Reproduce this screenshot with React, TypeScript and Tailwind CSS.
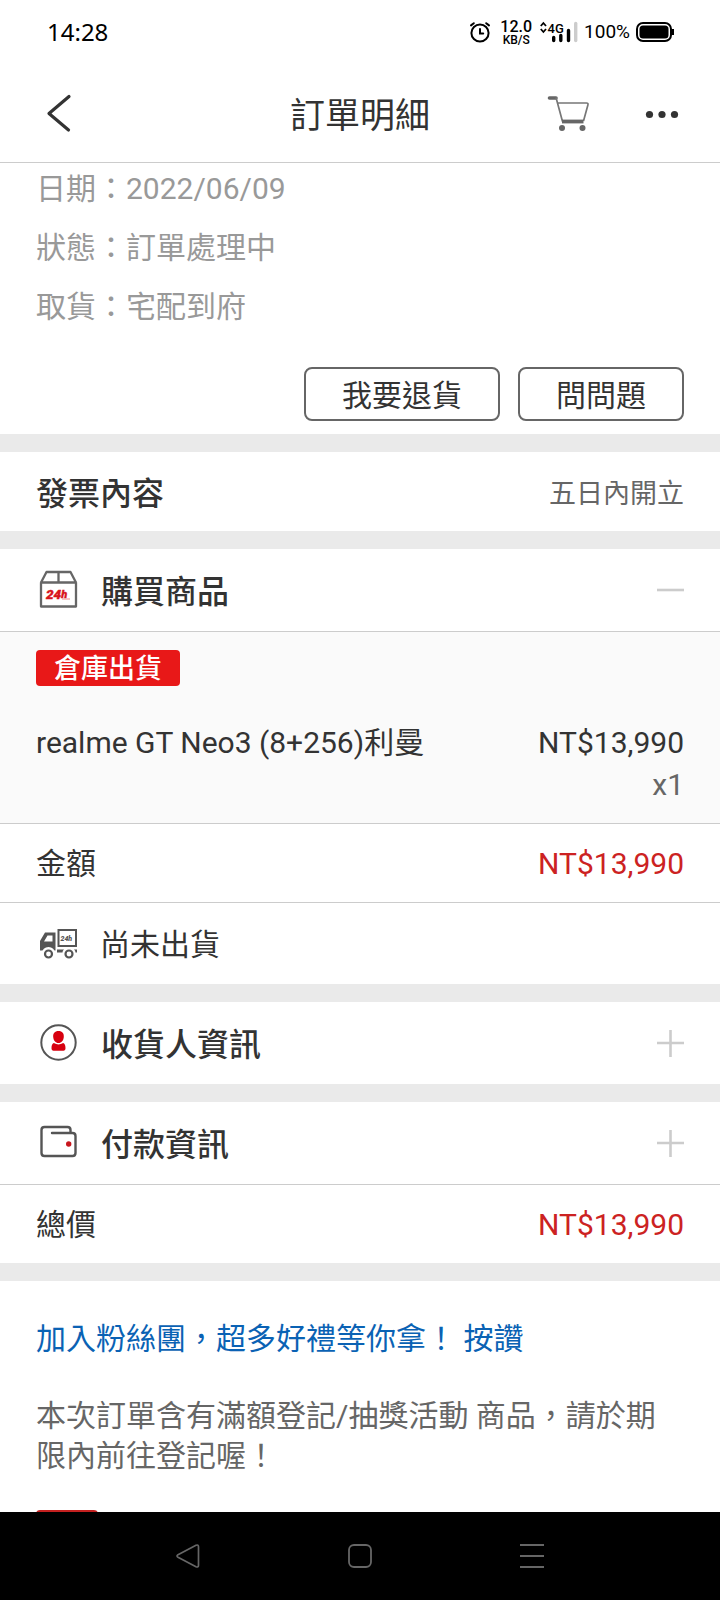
import { useState } from "react";
import type { ReactNode } from "react";

function AlarmIcon() {
  return (
    <svg viewBox="0 0 24 24" className="size-6" fill="none" stroke="#000" strokeWidth="2" strokeLinecap="round" aria-hidden="true">
      <circle cx="12" cy="13" r="8.6" />
      <path d="M12 9v4.6h3.2M3 5.4l2.8-2.2M21 5.4l-2.8-2.2" />
    </svg>
  );
}

function SignalIcon() {
  return (
    <svg viewBox="0 0 38 24" className="h-6 w-[38px]" aria-hidden="true">
      <path d="M.8 6 3.4 3 6 6M.8 9l2.600 3L6 9" fill="none" stroke="#000" strokeWidth="1.800" />
      <text x="7.500" y="12.500" fontSize="13" fontWeight="500" className="font-['Roboto',sans-serif]">4G</text>
      <g strokeWidth="3.400" strokeLinecap="round">
        <path d="M13.700 17.500v3M20.800 15.500v5M28.500 10.500v10" stroke="#000" />
        <path d="M35.700 3.500v17" stroke="#ccc" />
      </g>
    </svg>
  );
}

function BatteryIcon() {
  return (
    <svg viewBox="0 0 38 22" className="h-[22px] w-[38px]" aria-hidden="true">
      <rect x="1" y="2" width="34" height="18" rx="6" fill="none" stroke="#000" strokeWidth="2" />
      <rect x="3.500" y="4.500" width="29" height="13" rx="3.500" />
      <path d="M37 8v6" stroke="#000" strokeWidth="2" />
    </svg>
  );
}

function StatusBar() {
  return (
    <div className="flex h-16 shrink-0 items-center justify-between pr-[46px] pl-[47px] text-black">
      <span className="font-['Noto_Sans',sans-serif] text-[24px] leading-[32px]">14:28</span>
      <div className="flex items-center gap-2">
        <AlarmIcon />
        <div className="flex flex-col items-center font-medium">
          <span className="text-[16px] leading-[15px]">12.0</span>
          <span className="text-[12px] leading-[12px]">KB/S</span>
        </div>
        <div className="flex items-center gap-[6px]">
          <SignalIcon />
          <span className="text-[19px] leading-[24px]">100%</span>
          <BatteryIcon />
        </div>
      </div>
    </div>
  );
}

function Header() {
  return (
    <header className="grid h-[99px] shrink-0 grid-cols-[1fr_auto_1fr] items-center border-b border-[#ccc] px-10 text-[#333]">
      <button type="button" aria-label="返回" className="justify-self-start pl-[6px]">
        <svg viewBox="0 0 26 40" className="h-10 w-[26px]" fill="none" stroke="#333" strokeWidth="3.200" strokeLinecap="round" strokeLinejoin="round">
          <path d="M23 3.500 3 20.500 22.500 37" />
        </svg>
      </button>
      <h1 className="pt-2 text-[35px] leading-[44px]">訂單明細</h1>
      <div className="flex items-center gap-[53px] justify-self-end">
        <button type="button" aria-label="購物車">
          <svg viewBox="0 0 44 40" className="h-10 w-11" fill="none">
            <path d="M2.500 5h6.500" stroke="#666" strokeWidth="3.600" strokeLinecap="round" />
            <path d="M9 4.500 15.500 28.500M10.500 10h29q2 0 1.400 2L36.500 28" stroke="#777" strokeWidth="1.700" />
            <path d="M15 28.500h21.500" stroke="#666" strokeWidth="3.800" />
            <circle cx="15" cy="35" r="3" fill="#666" />
            <circle cx="35.500" cy="35" r="3" fill="#666" />
          </svg>
        </button>
        <button type="button" aria-label="更多">
          <svg viewBox="0 0 36 40" className="h-10 w-9" fill="#333">
            <circle cx="5.500" cy="21.500" r="3.600" />
            <circle cx="18" cy="21.500" r="3.600" />
            <circle cx="30.500" cy="21.500" r="3.600" />
          </svg>
        </button>
      </div>
    </header>
  );
}

function BoxIcon() {
  return (
    <svg viewBox="0 0 44 44" className="size-11 shrink-0" fill="none" stroke="#666" strokeWidth="2.300" aria-hidden="true">
      <path d="M5 14.500v24h35V14.500zM5 14.500 10.500 4h24L40 14.500M22.500 4v10.500" strokeLinejoin="round" />
      <text x="10" y="30.500" fontSize="13.500" fontWeight="900" fontStyle="italic" fill="#d8151b" stroke="#d8151b" strokeWidth=".4" className="font-['Roboto',sans-serif]">
        24<tspan fontSize="11" dy="-1">h</tspan>
      </text>
      <path d="M26 31h8" stroke="#e88" strokeWidth="1" />
    </svg>
  );
}

function TruckIcon() {
  return (
    <svg viewBox="0 0 44 44" className="size-11 shrink-0" fill="none" stroke="#555" strokeWidth="2" aria-hidden="true">
      <rect x="22.500" y="8" width="17.500" height="16" />
      <path d="M4 28.500V19l5-8.500h10.500v18zM8 19.500h8.500v-6h-5z" fill="#555" fillRule="evenodd" stroke="none" />
      <path d="M21 29h7.500M37 29h4" strokeWidth="3" />
      <circle cx="12.500" cy="31.500" r="5.600" fill="#fff" stroke="#fff" />
      <circle cx="33" cy="31.500" r="5.600" fill="#fff" stroke="#fff" />
      <circle cx="12.500" cy="32" r="3.500" strokeWidth="2.200" />
      <circle cx="33" cy="32" r="3.500" strokeWidth="2.200" />
      <text x="24.500" y="18.800" fontSize="7" fontWeight="900" fontStyle="italic" fill="#555" stroke="none" className="font-['Roboto',sans-serif]">24h</text>
    </svg>
  );
}

function PersonIcon() {
  return (
    <svg viewBox="0 0 44 44" className="size-11 shrink-0" fill="none" aria-hidden="true">
      <circle cx="22.500" cy="21.500" r="17.200" stroke="#555" strokeWidth="2" />
      <path d="M22.500 10c3.800 0 5.600 2.500 5.300 6-.3 3.500-2.300 6-5.300 6s-5-2.500-5.300-6c-.3-3.500 1.500-6 5.300-6z" fill="#d7000f" />
      <path d="M17.800 22q4.700 2.800 9.400 0c1.800.8 2.300 2.800 2.300 5.300 0 1.600-.7 2.500-2 2.500h-10c-1.300 0-2-.9-2-2.500 0-2.500.5-4.500 2.300-5.300z" fill="#d7000f" />
    </svg>
  );
}

function WalletIcon() {
  return (
    <svg viewBox="0 0 44 44" className="size-11 shrink-0" fill="none" stroke="#555" strokeWidth="2.400" strokeLinecap="round" strokeLinejoin="round" aria-hidden="true">
      <path d="M16 12h20.500q3 0 3 3v17q0 3-3 3H8.500q-3 0-3-3V9q0-3 3-3h23q3 0 3 3v3" />
      <circle cx="32.700" cy="23" r="2.700" fill="#c8161d" stroke="none" />
    </svg>
  );
}

function ToggleMark({ open }: { open: boolean }) {
  return (
    <svg viewBox="0 0 27 27" className="size-[27px] shrink-0" fill="none" stroke="#ccc" strokeWidth="2.600" aria-hidden="true">
      <path d={open ? "M0 13h27" : "M0 13h27M13.500 0v27"} />
    </svg>
  );
}

type AccordionProps = {
  icon: ReactNode;
  title: string;
  initiallyOpen?: boolean;
  children?: ReactNode;
};

function Accordion({ icon, title, initiallyOpen = false, children }: AccordionProps) {
  const [open, setOpen] = useState(initiallyOpen);
  return (
    <section>
      <h2>
        <button
          type="button"
          aria-expanded={open}
          onClick={() => setOpen(!open)}
          className="flex h-[82px] w-full items-center justify-between px-9 text-left"
        >
          <span className="flex items-center gap-[21px]">
            {icon}
            <span className="pt-1 text-[32px] leading-[40px] font-medium">{title}</span>
          </span>
          <ToggleMark open={open} />
        </button>
      </h2>
      {open && children}
    </section>
  );
}

function Band() {
  return <div className="h-[18px] bg-[#eaeaea]" />;
}

function AmountRow({ label, amount }: { label: string; amount: string }) {
  return (
    <div className="flex h-[79px] items-center justify-between border-t border-[#ccc] px-9 pt-[2px] text-[30px] leading-[40px]">
      <span>{label}</span>
      <span className="text-[#cc2222]">{amount}</span>
    </div>
  );
}

function ActionButton({ children }: { children: ReactNode }) {
  return (
    <button type="button" className="h-[54px] rounded-lg border-2 border-[#666] px-9 pt-1 text-[30px] leading-[40px] text-[#333]">
      {children}
    </button>
  );
}

function Summary() {
  const rows = ["日期：2022/06/09", "狀態：訂單處理中", "取貨：宅配到府"];
  return (
    <section className="px-9 pt-[6px] pb-[13px]">
      <ul className="flex flex-col gap-[19px] text-[30px] leading-[40px] text-[#999]">
        {rows.map((row) => (
          <li key={row}>{row}</li>
        ))}
      </ul>
      <div className="mt-10 flex justify-end gap-[18px]">
        <ActionButton>我要退貨</ActionButton>
        <ActionButton>問問題</ActionButton>
      </div>
    </section>
  );
}

function NavBar() {
  return (
    <nav className="shrink-0 bg-black">
      <div className="mx-auto grid h-[88px] max-w-[516px] grid-cols-3 items-center justify-items-center">
        <button type="button" aria-label="上一頁">
          <svg viewBox="0 0 24 24" className="size-6" fill="none" stroke="#666" strokeWidth="1.700" strokeLinejoin="round">
            <path d="M2 10.700 20 1.300q2.500-1 2.500 1.500v18.400q0 2.500-2.500 1.500L2 13.300q-2-1.300 0-2.600z" />
          </svg>
        </button>
        <button type="button" aria-label="主畫面">
          <svg viewBox="0 0 24 24" className="size-6" fill="none" stroke="#666" strokeWidth="1.800">
            <rect x="1" y="1" width="22" height="22" rx="5" />
          </svg>
        </button>
        <button type="button" aria-label="最近使用">
          <svg viewBox="0 0 24 24" className="size-6" stroke="#666" strokeWidth="2">
            <path d="M0 1h24M0 12h24M0 23h24" />
          </svg>
        </button>
      </div>
    </nav>
  );
}

export default function App() {
  return (
    <div lang="zh-Hant" className="flex h-screen flex-col bg-white font-['Roboto','Noto_Sans_CJK_TC',sans-serif] text-[#333]">
      <StatusBar />
      <Header />
      <main className="min-h-0 flex-1 overflow-y-auto [scrollbar-width:none]">
        <Summary />
        <Band />
        <section className="flex h-[79px] items-center justify-between px-9 pt-1">
          <h2 className="text-[32px] leading-[40px] font-medium">發票內容</h2>
          <span className="text-[27px] leading-[40px] text-[#666]">五日內開立</span>
        </section>
        <Band />
        <Accordion icon={<BoxIcon />} title="購買商品" initiallyOpen>
          <div className="border-t border-[#ccc] bg-[#fafafa] px-9 pt-[18px] pb-[17px]">
            <span className="block h-9 w-fit rounded-[4px] bg-[#e81818] px-[18px] text-[27px] leading-[38px] font-medium text-white">
              倉庫出貨
            </span>
            <div className="mt-9 flex justify-between text-[30px] leading-[42px]">
              <p>realme GT Neo3 (8+256)利曼</p>
              <div className="text-right">
                <p>NT$13,990</p>
                <p className="text-[#666]">x1</p>
              </div>
            </div>
          </div>
          <AmountRow label="金額" amount="NT$13,990" />
          <div className="flex h-[82px] items-center gap-5 border-t border-[#ccc] px-9">
            <TruckIcon />
            <span className="pt-[2px] text-[30px] leading-[40px]">尚未出貨</span>
          </div>
        </Accordion>
        <Band />
        <Accordion icon={<PersonIcon />} title="收貨人資訊" />
        <Band />
        <Accordion icon={<WalletIcon />} title="付款資訊" />
        <AmountRow label="總價" amount="NT$13,990" />
        <Band />
        <section className="px-9 pt-[38px] pb-9 text-[30px] leading-[40px]">
          <a href="#fans" className="block text-[#0a62b4]">
            加入粉絲團，超多好禮等你拿！ 按讚
          </a>
          <p className="mt-[37px] text-[#666]">
            本次訂單含有滿額登記/抽獎活動 商品，請於期限內前往登記喔！
          </p>
          <div className="mt-[34px] h-9 w-[62px] rounded bg-[#c4201f]" />
        </section>
      </main>
      <NavBar />
    </div>
  );
}
